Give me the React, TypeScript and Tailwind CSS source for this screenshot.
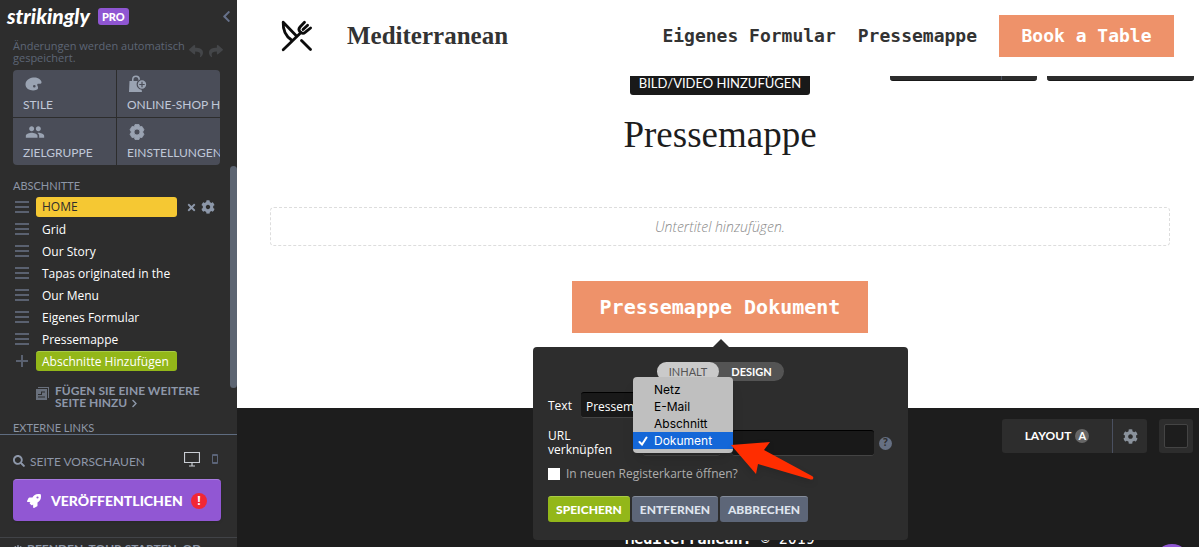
import React from "react";
import { FaChevronLeft, FaChevronRight, FaCog, FaPowerOff, FaReply, FaRocket, FaSearch, FaShare, FaTimes } from "react-icons/fa";
import { MdPeople } from "react-icons/md";

const SECTIONS = ["HOME", "Grid", "Our Story", "Tapas originated in the", "Our Menu", "Eigenes Formular", "Pressemappe"];

function BagIcon() {
  return (
    <svg width="18" height="18" viewBox="0 0 18 18" fill="currentColor" aria-hidden="true">
      <path fillRule="evenodd" d="M0.500 6H3V4.500a4 4 0 0 1 8 0A5.200 5.200 0 0 0 7.600 9.500a5.200 5.200 0 0 0 5 5.200L13 17H0zM4.500 6h5V4.500a2.500 2.500 0 0 0-5 0z" />
      <path fillRule="evenodd" d="M13 5.300a4.200 4.200 0 1 1 0 8.400a4.200 4.200 0 1 1 0-8.400zM12.400 6.800v2.100h-2.100v1.200h2.100v2.100h1.200v-2.100h2.100V8.900h-2.100V6.800z" />
    </svg>
  );
}

function PaletteIcon() {
  return (
    <svg width="17" height="14" viewBox="0 0 17 14" fill="currentColor" aria-hidden="true">
      <path fillRule="evenodd" d="M8 .5C12 0 16 2 16.500 5c.3 2-1.500 1.700-3 1.800-1.400.1-1.500 1-1 2 .9 1.700.8 3.200-1 4C7 14.500.5 12.500.5 7.500.5 3.500 4 1 8 .5zM9.300 8a1.300 1.300 0 1 0 0 2.600a1.300 1.300 0 0 0 0-2.600z" />
    </svg>
  );
}

function FlowerGearIcon() {
  return (
    <svg width="16" height="16" viewBox="0 0 16 16" aria-hidden="true">
      <path fill="currentColor" stroke="currentColor" strokeWidth="0.800" fillRule="evenodd" strokeLinejoin="round" d="M6 .5h4l.8 2.200 2.200-.3 2 3.400L13.600 8l1.400 2.200-2 3.400-2.200-.3L10 15.500H6l-.8-2.200-2.200.3-2-3.400L2.400 8 1 5.800l2-3.400 2.200.3zM8 5a3 3 0 1 0 0 6a3 3 0 0 0 0-6z" />
    </svg>
  );
}

function Handle() {
  return (
    <svg className="shrink-0" width="14" height="12" viewBox="0 0 14 12" stroke="#5a6170" strokeWidth="2" aria-hidden="true">
      <path d="M0 1h14M0 6h14M0 11h14" />
    </svg>
  );
}

function CutleryIcon() {
  return (
    <svg width="32" height="32" viewBox="0 0 32 32" fill="none" stroke="#0c0c0c" strokeWidth="2.800" strokeLinecap="round" strokeLinejoin="round" aria-hidden="true">
      <path d="M2.200 2.200 15 15.500M2.200 2.200C1.800 10 4 15.500 10.500 20M2.200 29.800 20 12.500" />
      <path d="M20.500 20.500l9 9" />
      <path d="M23.500 2.200 19 7c-1.400 1.600-1.200 3.600.2 5s3.600 1.600 5.200.2l5.200-4.200M26.600 5.200 22 9.500" />
    </svg>
  );
}

function Tile({ icon, label }: { icon: React.ReactNode; label: string }) {
  return (
    <button type="button" className="flex h-[47px] min-w-0 flex-col items-start overflow-hidden bg-[#4a4d58] pt-1 pl-2.5 text-left text-[#9aa3b2]">
      <span className="flex h-[19px] items-center pl-0.5">{icon}</span>
      <span className="font-[Lato] text-xs leading-6 whitespace-nowrap text-[#c0c8d8]">{label}</span>
    </button>
  );
}

function Sidebar() {
  return (
    <aside className="relative flex h-screen w-[237px] shrink-0 flex-col overflow-hidden bg-[#2d2d2d]">
      <div className="flex h-8 shrink-0 items-center pr-1 pl-[7px]">
        <span className="font-[Lato] text-[21px] font-black text-white italic">strikingly</span>
        <span className="ml-2 rounded-[3px] bg-[#8f56d2] px-1 font-[Lato] text-[11px] leading-[17px] font-black text-white">PRO</span>
        <button type="button" aria-label="Einklappen" className="ml-auto text-[#66718a]"><FaChevronLeft size={13} /></button>
      </div>
      <div className="flex h-[38px] shrink-0 items-start justify-between pt-2 pr-3.5 pl-[13px]">
        <p className="w-[172px] shrink-0 text-[11px] leading-3 text-[#5d6676]">Änderungen werden automatisch gespeichert.</p>
        <div className="flex gap-1.5 pt-1 text-[#444649]">
          <FaReply size={14} />
          <FaShare size={14} />
        </div>
      </div>
      <div className="mr-[17px] ml-[13px] grid shrink-0 grid-cols-2 gap-px overflow-hidden rounded">
        <Tile icon={<PaletteIcon />} label="STILE" />
        <Tile icon={<BagIcon />} label="ONLINE-SHOP HINZUFÜGEN" />
        <Tile icon={<MdPeople size={20} />} label="ZIELGRUPPE" />
        <Tile icon={<FlowerGearIcon />} label="EINSTELLUNGEN" />
      </div>
      <div className="min-h-0 flex-1 overflow-hidden pt-[13px] pl-[13px]">
        <h2 className="font-[Lato] text-[11px] leading-4 text-[#8d96a6]">ABSCHNITTE</h2>
        <ul className="mt-[3px] flex flex-col gap-0.5">
          {SECTIONS.map((name, i) => (
            <li key={name} className="flex h-5 items-center pl-0.5">
              <Handle />
              <a href="#" className={i === 0 ? "ml-[7px] w-[141px] rounded-[3px] bg-[#f5c833] px-1.5 text-xs leading-5 text-[#2d2d2d]" : "ml-[7px] w-[141px] px-1.5 pt-0.5 text-xs leading-5 whitespace-nowrap text-white"}>
                {name}
              </a>
              {i === 0 && (
                <span className="flex items-center gap-1 pl-[9px] text-[#8c97a9]">
                  <FaTimes size={11} />
                  <FaCog size={14} />
                </span>
              )}
            </li>
          ))}
          <li className="flex h-5 items-center pl-0.5">
            <svg className="shrink-0" width="14" height="12" viewBox="0 0 14 12" stroke="#5a6170" strokeWidth="2" aria-hidden="true"><path d="M1 6h12M7 0v12" /></svg>
            <button type="button" className="ml-[7px] w-[141px] rounded-[3px] border-t border-[#a9cc45] bg-[#93b719] px-1.5 text-left text-xs leading-[19px] whitespace-nowrap text-white">
              Abschnitte Hinzufügen
            </button>
          </li>
        </ul>
        <button type="button" className="mt-3.5 ml-[23px] flex items-start gap-1.5 text-left text-[#8d97a9]">
          <svg className="mt-0.5 shrink-0" width="13" height="13" viewBox="0 0 13 13" aria-hidden="true">
            <path d="M2 0h11v11h-1V1H2z" fill="#69707c" />
            <path fillRule="evenodd" d="M0 2h11v11H0zM2 7h3V4.500h4v1H6v2.500H2zM2 9.500h7v1H2z" fill="#69707c" />
          </svg>
          <span className="font-[Lato] text-xs leading-3 font-bold">
            FÜGEN SIE EINE WEITERE<br />SEITE HINZU <FaChevronRight size={9} className="inline" />
          </span>
        </button>
        <h2 className="mt-[11px] font-[Lato] text-[11px] leading-4 text-[#8d96a6]">EXTERNE LINKS</h2>
      </div>
      <div className="h-[113px] shrink-0 border-t border-[#5f6c80] pt-4 pr-4 pl-[13px]">
        <div className="flex h-5 items-center text-[#8d97a9]">
          <FaSearch size={12} />
          <span className="pt-0.5 pl-[5px] font-[Lato] text-xs">SEITE VORSCHAUEN</span>
          <svg className="mr-3 mb-1 ml-auto" width="16" height="15" viewBox="0 0 16 15" aria-hidden="true">
            <path d="M.5.5h15v10H.5zM8 11v3M5 14h6" fill="none" stroke="#c9cdd3" strokeWidth="1.200" />
          </svg>
          <svg className="mr-[3px] mb-1" width="6" height="10" viewBox="0 0 6 10" aria-hidden="true">
            <path d="M.5.5h5v9h-5zM.5 1.500h5M.5 8.500h5" fill="none" stroke="#5b6478" />
          </svg>
        </div>
        <button type="button" className="mt-2 flex h-[42px] w-full items-center rounded border-t border-[#a87be0] bg-[#9157d3] px-3.5 text-white shadow">
          <FaRocket size={14} />
          <span className="pl-2.5 font-[Lato] text-sm font-black">VERÖFFENTLICHEN</span>
          <span className="ml-auto flex size-4 items-center justify-center rounded-full bg-[#f22735] text-xs font-bold">!</span>
        </button>
      </div>
      <div className="absolute inset-x-0 bottom-0 flex h-2.5 items-start gap-1 overflow-hidden border-t border-[#414347] pt-[5px] pl-[13px] text-[#8d97a9]">
        <FaPowerOff size={10} className="mt-0.5 shrink-0" />
        <span className="font-[Lato] text-xs leading-3 font-bold whitespace-nowrap">BEENDEN, TOUR STARTEN, OD</span>
      </div>
      <div className="absolute top-[166px] right-0 h-[222px] w-[7px] rounded-full bg-[#5d6572]" />
    </aside>
  );
}

function LinkEditor() {
  return (
    <div className="absolute top-full -left-[39px] z-20 mt-3.5 h-[193px] w-[375px] rounded bg-[#2d2d2d] px-[15px] pt-[15px] text-left text-xs text-white">
      <svg className="absolute -top-2 left-[180px]" width="16" height="8" viewBox="0 0 16 8" aria-hidden="true"><path d="M0 8 8 0l8 8z" fill="#2d2d2d" /></svg>
      <div className="ml-[109px] flex h-[19px] w-[127px] rounded-full bg-[#545454] font-[Lato] text-[11px] leading-[19px]">
        <button type="button" className="w-[62px] rounded-full bg-[#cacaca] text-[#545454]">INHALT</button>
        <button type="button" className="flex-1 font-bold">DESIGN</button>
      </div>
      <div className="mt-[11px] flex items-center">
        <label htmlFor="link-text" className="w-[33px] pt-0.5">Text</label>
        <input id="link-text" defaultValue="Pressemappe Dokument" className="h-[26px] w-[150px] rounded-[3px] border-t border-b border-t-black border-b-[#444] bg-[#191919] px-[5px] pt-0.5 text-xs text-white" />
      </div>
      <div className="mt-[11px] flex items-center">
        <label htmlFor="link-url" className="w-[95px] leading-3.5">URL<br />verknüpfen</label>
        <div className="h-[26px] w-[77px] rounded-[3px] border-b border-[#444]" />
        <input id="link-url" className="ml-3 h-[26px] w-[142px] rounded-[3px] border-t border-b border-t-black border-b-[#444] bg-[#191919] px-[5px] text-white" />
        <span className="ml-[5px] flex size-[13px] items-center justify-center rounded-full bg-[#667083] text-[10px] font-bold text-[#2d2d2d]">?</span>
      </div>
      <label className="mt-2 flex h-[18px] items-center gap-1.5 text-[#adadad]">
        <input type="checkbox" className="size-3 appearance-none bg-white" />
        In neuen Registerkarte öffnen?
      </label>
      <div className="mt-[13px] flex gap-0.5 font-[Lato] text-xs font-black">
        <button type="button" className="h-[26px] w-[82px] rounded-[3px] border-t border-[#a9cc45] bg-[#93b719]">SPEICHERN</button>
        <button type="button" className="h-[26px] w-[86px] rounded-[3px] border-t border-[#858d9b] bg-[#5d6678] text-[#dfe4ee]">ENTFERNEN</button>
        <button type="button" className="h-[26px] w-[88px] rounded-[3px] border-t border-[#858d9b] bg-[#5d6678] text-[#dfe4ee]">ABBRECHEN</button>
      </div>
      <ul role="listbox" aria-label="Linktyp" className="absolute top-[30px] left-[100px] h-[76px] w-[100px] overflow-hidden rounded bg-[#bfbfbf] pt-1 font-[Inter] text-xs leading-[17px] text-black shadow-lg">
        <li role="option" aria-selected="false" className="pl-[21px]">Netz</li>
        <li role="option" aria-selected="false" className="pl-[21px]">E-Mail</li>
        <li role="option" aria-selected="false" className="pl-[21px]">Abschnitt</li>
        <li role="option" aria-selected="true" className="flex items-center bg-[#1467d8] pl-[5px] text-white">
          <svg className="mr-1.5" width="10" height="10" viewBox="0 0 10 10" fill="none" stroke="white" strokeWidth="2" strokeLinecap="round" aria-hidden="true"><path d="M1.500 6 4 8.500 8.500 1.500" /></svg>
          Dokument
        </li>
      </ul>
      <svg className="absolute top-[94px] left-[198px] drop-shadow-md" width="84" height="42" viewBox="0 0 84 42" aria-hidden="true">
        <path d="M0 4 39 1l-6 8 48 26q2 1 1 3-1 1-4 0L27 23l-2 10z" fill="#ff2d00" />
      </svg>
    </div>
  );
}

export default function App() {
  return (
    <div className="flex h-screen overflow-hidden bg-white font-['Open_Sans',sans-serif]">
      <Sidebar />
      <main className="flex min-w-0 flex-1 flex-col">
        <header className="relative z-10 flex h-[76px] shrink-0 items-center bg-white pr-[25px] pb-1 pl-11">
          <CutleryIcon />
          <span className="pl-[34px] font-['Liberation_Serif',serif] text-[25px] font-bold text-[#333]">Mediterranean</span>
          <nav className="ml-auto flex items-center gap-[22px] font-['DejaVu_Sans_Mono',monospace] text-lg font-bold whitespace-nowrap text-[#333]">
            <a href="#">Eigenes Formular</a>
            <a href="#">Pressemappe</a>
            <a href="#" className="w-[175px] bg-[#ee926a] text-center leading-[42px] text-white">Book a Table</a>
          </nav>
        </header>
        <section className="relative flex h-[332px] shrink-0 flex-col items-center pr-[29px] pl-[33px]">
          <div className="absolute -top-[29px] right-[5px] flex gap-2.5">
            <div className="flex h-[34px] w-[147px] rounded-[3px] border-b border-[#191919] bg-[#2d2d2d]"><span className="ml-auto w-9 border-l border-[#4a5060]" /></div>
            <div className="h-[34px] w-[147px] rounded-[3px] border-b border-[#191919] bg-[#2d2d2d]" />
          </div>
          <button type="button" className="-mt-1.5 h-[25px] w-[180px] rounded-[3px] bg-[#191919] pt-px font-[Lato] text-[13px] leading-6 whitespace-nowrap text-white">BILD/VIDEO HINZUFÜGEN</button>
          <h1 className="mt-4 font-['Liberation_Serif',serif] text-[37px] leading-[48px] text-[#1d1d1d]">Pressemappe</h1>
          <p className="mt-12 w-full rounded border border-dashed border-[#ddd] text-center text-sm leading-[37px] font-light text-[#888] italic">Untertitel hinzufügen.</p>
          <div className="relative mt-[35px]">
            <a href="#" className="block w-[296px] bg-[#ee926a] text-center font-['DejaVu_Sans_Mono',monospace] text-xl leading-[52px] font-bold whitespace-nowrap text-white">Pressemappe Dokument</a>
            <LinkEditor />
          </div>
        </section>
        <footer className="relative flex-1 overflow-hidden bg-[#1d1d1d]">
          <div className="flex justify-end gap-3 pt-[11px] pr-1.5 font-[Lato] text-xs font-bold text-white">
            <div className="flex h-[34px] rounded-[3px] bg-[#2d2d2d]">
              <button type="button" className="flex w-[110px] items-center justify-center gap-1">
                LAYOUT
                <span className="flex size-3.5 items-center justify-center rounded-full bg-[#666] text-[11px]">A</span>
              </button>
              <button type="button" aria-label="Einstellungen" className="flex w-[35px] items-center justify-center border-l border-[#4a5060] text-[#8a929c]"><FaCog size={15} /></button>
            </div>
            <button type="button" aria-label="Hintergrund" className="flex size-[34px] items-center justify-center rounded-[3px] bg-[#2d2d2d]"><span className="size-6 rounded-[2px] border border-[#444] bg-[#1d1d1d]" /></button>
          </div>
          <p className="mt-[76px] pr-[29px] pl-[33px] text-center font-['DejaVu_Sans_Mono',monospace] text-[15px] leading-5 text-white"><b>Mediterranean.</b> © 2019</p>
          <button type="button" aria-label="Chat" className="absolute right-[9px] -bottom-[33px] size-9 rounded-full bg-[#8f56d2]" />
        </footer>
      </main>
    </div>
  );
}
